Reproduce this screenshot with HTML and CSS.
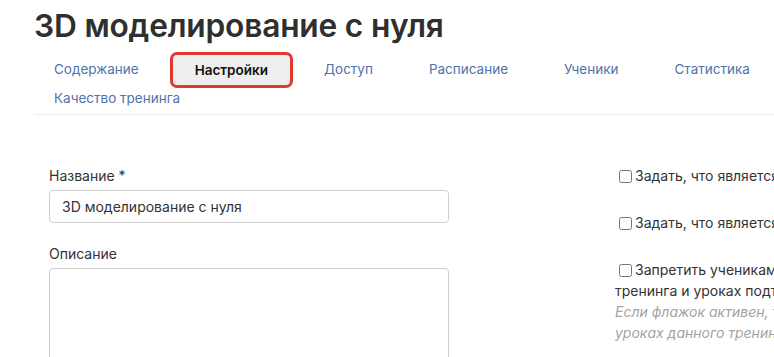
FILE: index.html
```html
<!DOCTYPE html>
<html lang="ru">
<head>
<meta charset="utf-8">
<title>3D моделирование с нуля</title>
<link rel="stylesheet" href="styles.css">
</head>
<body>
<div class="page">
  <h1 class="title">3D моделирование с нуля</h1>
  <div class="tabs-wrap">
    <nav class="tabs">
      <a class="tab" href="#">Содержание</a>
      <a class="tab active" href="#">Настройки</a>
      <a class="tab" href="#">Доступ</a>
      <a class="tab" href="#">Расписание</a>
      <a class="tab" href="#">Ученики</a>
      <a class="tab" href="#">Статистика</a>
      <a class="tab" href="#">Качество тренинга</a>
    </nav>
  </div>
  <div class="content">
    <div class="col-left">
      <div class="field">
        <label class="label">Название *</label>
        <input class="input" type="text" value="3D моделирование с нуля">
      </div>
      <div class="field">
        <label class="label">Описание</label>
        <textarea class="textarea"></textarea>
      </div>
    </div>
    <div class="col-right">
      <label class="check"><input type="checkbox">Задать, что является результатом прохождения тренинга</label>
      <label class="check"><input type="checkbox">Задать, что является условием доступа к тренингу</label>
      <div class="check-block">
        <label class="check"><input type="checkbox">Запретить ученикам оставлять комментарии в уроках<br>тренинга и уроках подтренингов</label>
        <div class="hint">Если флажок активен, то ученики не смогут комментировать<br>уроках данного тренинга</div>
      </div>
    </div>
  </div>
</div>
</body>
</html>
```

FILE: styles.css
```css
html, body {
  margin: 0;
  padding: 0;
  background: #fff;
  overflow: hidden;
}
body {
  font-family: Inter, "Noto Sans", "Liberation Sans", sans-serif;
  color: #333;
  width: 774px;
  height: 357px;
}
.page {
  padding-left: 34px;
  width: 1000px;
}
.title {
  margin: 0;
  padding-top: 6px;
  font-size: 31.7px;
  line-height: 40px;
  font-weight: 600;
  color: #2f2f2f;
  letter-spacing: -0.2px;
  white-space: nowrap;
}
.tabs-wrap {
  margin-top: 9px;
  border-bottom: 1px solid #ececec;
  padding-bottom: 1px;
}
.tabs {
  display: flex;
  flex-wrap: wrap;
  align-items: center;
  column-gap: 6px;
  width: 800px;
  margin-left: -5px;
}
.tab {
  display: block;
  padding: 5px 25px;
  font-size: 13.5px;
  line-height: 19px;
  color: #5072aa;
  text-decoration: none;
  white-space: nowrap;
}
.tab.active {
  padding: 6px 22px 5px;
  margin: -4px 0;
  border: 3px solid #e03a2f;
  border-radius: 7px;
  background: #eeeeee;
  color: #111;
  font-weight: 600;
}
.content {
  display: flex;
  padding-top: 51px;
  padding-left: 15px;
}
.col-left {
  width: 400px;
  flex: none;
}
.field {
  display: flex;
  flex-direction: column;
  margin-bottom: 21px;
}
.label {
  font-size: 14px;
  line-height: 20px;
  color: #333;
  margin-bottom: 4px;
}
.input {
  box-sizing: border-box;
  height: 33px;
  width: 400px;
  border: 1px solid #cfcfcf;
  border-radius: 4px;
  padding: 0 12px;
  font-family: inherit;
  font-size: 14px;
  color: #333;
}
.textarea {
  box-sizing: border-box;
  width: 400px;
  height: 150px;
  border: 1px solid #cfcfcf;
  border-radius: 4px;
  resize: none;
}
.col-right {
  flex: none;
  margin-left: 166px;
  display: flex;
  flex-direction: column;
  gap: 26px;
  margin-top: -1px;
  white-space: nowrap;
}
.check {
  display: block;
  font-size: 14px;
  line-height: 21px;
  color: #333;
}
.check input {
  width: 13px;
  height: 13px;
  margin: 0 3px 0 4px;
  vertical-align: -2px;
}
.hint {
  font-size: 14px;
  line-height: 21px;
  font-style: italic;
  color: #a3a3a3;
}
```
